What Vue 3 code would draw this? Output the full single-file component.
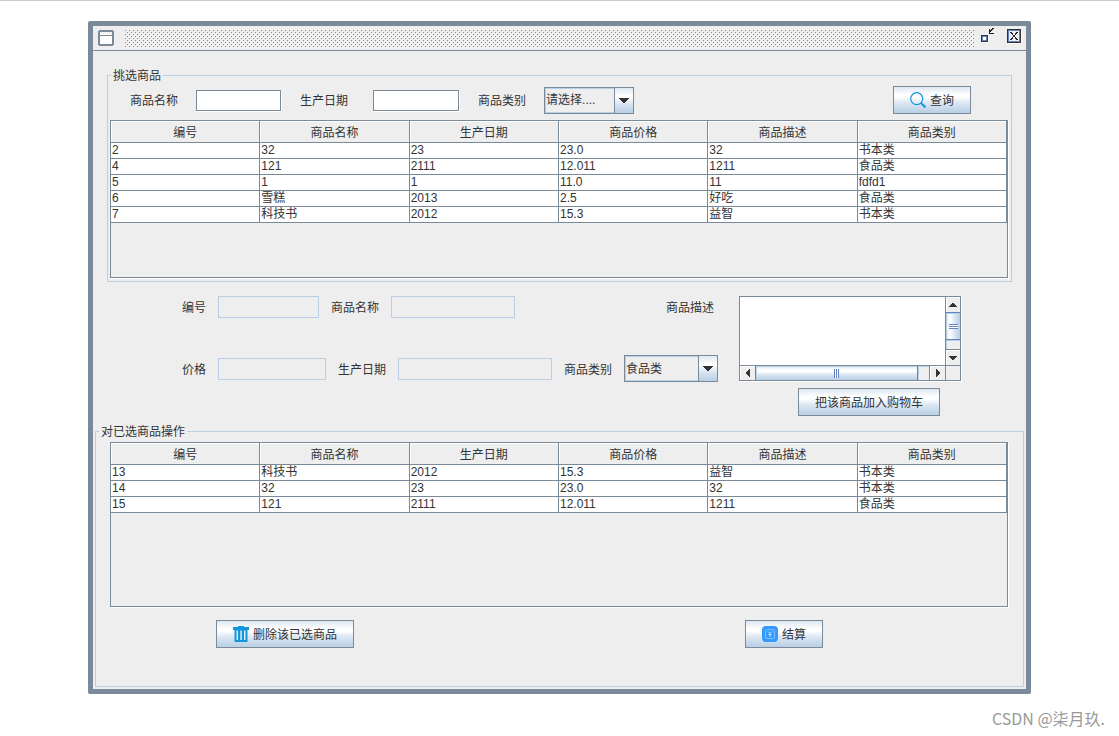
<script setup>
import { ref } from 'vue'

const columns = ['编号', '商品名称', '生产日期', '商品价格', '商品描述', '商品类别']

const goods = [
  ['2', '32', '23', '23.0', '32', '书本类'],
  ['4', '121', '2111', '12.011', '1211', '食品类'],
  ['5', '1', '1', '11.0', '11', 'fdfd1'],
  ['6', '雪糕', '2013', '2.5', '好吃', '食品类'],
  ['7', '科技书', '2012', '15.3', '益智', '书本类'],
]

const cart = [
  ['13', '科技书', '2012', '15.3', '益智', '书本类'],
  ['14', '32', '23', '23.0', '32', '书本类'],
  ['15', '121', '2111', '12.011', '1211', '食品类'],
]

const searchName = ref('')
const searchDate = ref('')
const searchType = ref('请选择....')
const type = ref('食品类')
const description = ref('')
</script>

<template>
  <div class="page">
    <main class="window">
      <header class="titlebar">
        <svg class="frame-icon" width="16" height="16" shape-rendering="crispEdges">
          <path fill="#7a8a99" d="M1 0h14v1h1v14h-1v1H1v-1H0V1h1z" />
          <path fill="#fff" d="M2 2h12v3H2zM2 6h12v8H2z" />
          <path fill="#b8cfe5" d="M3 2h1v1H3zM7 2h1v1H7zM11 2h1v1h-1zM5 3h1v1H5zM9 3h1v1H9zM13 3h1v1h-1z" />
        </svg>
        <svg class="bumps" width="100%" height="18" shape-rendering="crispEdges">
          <defs>
            <pattern id="bumps" width="4" height="4" patternUnits="userSpaceOnUse">
              <path fill="#fff" d="M0 0h1v1H0zM2 2h1v1H2z" />
              <path fill="#7a8a99" d="M1 1h1v1H1zM3 3h1v1H3z" />
            </pattern>
          </defs>
          <rect width="100%" height="18" fill="url(#bumps)" />
        </svg>
        <button class="title-btn" aria-label="还原">
          <svg width="15" height="16" shape-rendering="crispEdges">
            <path fill="#fff" d="M2 8h7v7H2z" />
            <path fill="#333" d="M1 7h7v7H1z" />
            <path fill="#6382bf" d="M2 8h5v5H2z" />
            <path fill="#fff" d="M3 9h3v3H3z" />
            <path fill="#222" d="M12 0h2v1h-2zM11 1h2v1h-2zM10 2h2v1h-2zM9 1h1v4h4v1H9zM9 3h2v1H9z" />
          </svg>
        </button>
        <button class="title-btn" aria-label="关闭">
          <svg width="15" height="15" shape-rendering="crispEdges">
            <path fill="#fff" d="M1 1h14v14H1z" />
            <path fill="#333" d="M0 0h14v14H0z" />
            <path fill="#6382bf" d="M1 1h12v12H1z" />
            <path fill="#eee" d="M2 2h10v10H2z" />
            <path
              fill="#222a44"
              d="M3 3h2v1H3zM4 4h2v1H4zM5 5h1v1H5zM6 6h2v2H6zM5 8h1v1H5zM4 9h2v1H4zM3 10h2v1H3zM9 3h2v1H9zM8 4h2v1H8zM8 5h1v1H8zM8 8h1v1H8zM8 9h2v1H8zM9 10h2v1H9z"
            />
          </svg>
        </button>
      </header>

      <fieldset class="group group-search">
        <legend>挑选商品</legend>
        <form class="search-row" @submit.prevent>
          <label for="s-name">商品名称</label>
          <input id="s-name" v-model="searchName" class="field first" type="text" />
          <label for="s-date">生产日期</label>
          <input id="s-date" v-model="searchDate" class="field second" type="text" />
          <label for="s-type">商品类别</label>
          <div class="combo combo-search">
            <select id="s-type" v-model="searchType">
              <option>请选择....</option>
              <option>书本类</option>
              <option>食品类</option>
            </select>
            <span class="combo-arrow"><svg width="10" height="5" shape-rendering="crispEdges"><path fill="#333" d="M0 0h10v1H9v1H8v1H7v1H6v1H4V4H3V3H2V2H1V1H0z" /></svg></span>
          </div>
          <button class="btn query" type="submit">
            <svg width="16" height="16" viewBox="0 0 16 16" fill="none">
              <circle cx="6.7" cy="6.7" r="6" stroke="#1296db" stroke-width="1.2" />
              <path stroke="#1296db" stroke-width="2" d="M11 11l4.4 4.4" />
            </svg>
            <span>查询</span>
          </button>
        </form>
        <div class="scrollpane pane-goods">
          <table>
            <thead>
              <tr><th v-for="c in columns" :key="c" scope="col">{{ c }}</th></tr>
            </thead>
            <tbody>
              <tr v-for="r in goods" :key="r[0]"><td v-for="(v, i) in r" :key="i">{{ v }}</td></tr>
            </tbody>
          </table>
        </div>
      </fieldset>

      <form class="detail" @submit.prevent>
        <div class="detail-left">
          <div class="detail-row upper">
            <label for="d-id">编号</label>
            <input id="d-id" class="readonly w-id" type="text" readonly />
            <label for="d-name">商品名称</label>
            <input id="d-name" class="readonly w-name" type="text" readonly />
            <label class="desc-label" for="d-desc">商品描述</label>
          </div>
          <div class="detail-row lower">
            <label for="d-price">价格</label>
            <input id="d-price" class="readonly w-price" type="text" readonly />
            <label for="d-date">生产日期</label>
            <input id="d-date" class="readonly w-date" type="text" readonly />
            <label for="d-type">商品类别</label>
            <div class="combo combo-type">
              <select id="d-type" v-model="type">
                <option>食品类</option>
                <option>书本类</option>
              </select>
              <span class="combo-arrow"><svg width="10" height="5" shape-rendering="crispEdges"><path fill="#333" d="M0 0h10v1H9v1H8v1H7v1H6v1H4V4H3V3H2V2H1V1H0z" /></svg></span>
            </div>
          </div>
        </div>
        <div class="detail-right">
          <div class="textpane">
            <textarea id="d-desc" v-model="description"></textarea>
            <div class="vbar">
              <button class="bar-btn" type="button" aria-label="向上"><svg width="8" height="4" shape-rendering="crispEdges"><path fill="#333" d="M3 0h2v1h1v1h1v1h1v1H0V3h1V2h1V1h1z" /></svg></button>
              <div class="thumb"><i></i></div>
              <div class="track"></div>
              <button class="bar-btn" type="button" aria-label="向下"><svg width="8" height="4" shape-rendering="crispEdges"><path fill="#333" d="M0 0h8v1H7v1H6v1H5v1H3V3H2V2H1V1H0z" /></svg></button>
            </div>
            <div class="hbar">
              <button class="bar-btn" type="button" aria-label="向左"><svg width="4" height="8" shape-rendering="crispEdges"><path fill="#333" d="M4 0v8H3V7H2V6H1V5H0V3h1V2h1V1h1V0z" /></svg></button>
              <div class="thumb"><i></i></div>
              <div class="track"></div>
              <button class="bar-btn" type="button" aria-label="向右"><svg width="4" height="8" shape-rendering="crispEdges"><path fill="#333" d="M0 0h1v1h1v1h1v1h1v2H3v1H2v1H1v1H0z" /></svg></button>
            </div>
            <div class="corner"></div>
          </div>
          <button class="btn add" type="submit"><span>把该商品加入购物车</span></button>
        </div>
      </form>

      <fieldset class="group group-cart">
        <legend>对已选商品操作</legend>
        <div class="scrollpane pane-cart">
          <table>
            <thead>
              <tr><th v-for="c in columns" :key="c" scope="col">{{ c }}</th></tr>
            </thead>
            <tbody>
              <tr v-for="r in cart" :key="r[0]"><td v-for="(v, i) in r" :key="i">{{ v }}</td></tr>
            </tbody>
          </table>
        </div>
        <div class="actions">
          <button class="btn remove" type="button">
            <svg width="16" height="16" viewBox="0 0 16 16">
              <path fill="#1296db" d="M5 0h6v1h5v3h-1.500v12h-13V4H0V1h5z" />
              <path fill="#dcebf6" d="M3.500 4.500h1.500V14H3.500zM7.300 4.500h1.500V14H7.300zM11 4.500h1.500V14H11z" />
            </svg>
            <span>删除该已选商品</span>
          </button>
          <button class="btn settle" type="button">
            <svg width="16" height="16" viewBox="0 0 16 16" fill="none">
              <rect width="16" height="16" rx="4" fill="#3399ff" />
              <rect x="3.5" y="3.5" width="9" height="9" rx="1.5" stroke="#7dbeff" />
              <path stroke="#c4e1ff" d="M6 5.500l2 2 2-2M8 7.500V11M6.500 8.500h3" />
            </svg>
            <span>结算</span>
          </button>
        </div>
      </fieldset>
    </main>
    <footer class="credit">CSDN @柒月玖.</footer>
  </div>
</template>

<style>
body {
  background: #fff;
}
</style>

<style scoped>
.page {
  --line: #7a8a99;
  --soft: #b8cfe5;
  --metal: linear-gradient(#dde8f3, #fff 30%, #fff 38%, #dde8f3 60%, #b8cfe5);
  border-top: 1px solid #ccc;
  padding: 20px 88px 0;
  color: #333;
  font: 12px/16px "Liberation Sans", "Noto Sans CJK SC", sans-serif;
}
.page * {
  box-sizing: border-box;
}
button,
input,
select,
textarea {
  margin: 0;
  padding: 0;
  border: 0;
  border-radius: 0;
  background: none;
  color: inherit;
  font: inherit;
  outline: none;
}
svg {
  display: block;
  flex: none;
}
.window {
  border: 5px solid var(--line);
  border-radius: 2px;
  background: #eee;
  padding-bottom: 2px;
}
.titlebar {
  display: flex;
  align-items: center;
  height: 25px;
  padding: 0 4px 0 5px;
  border-bottom: 1px solid var(--line);
}
.bumps {
  flex: 1;
  min-width: 0;
  margin: 0 6px 0 10px;
}
.title-btn {
  display: flex;
  margin-bottom: 4px;
}
.title-btn + .title-btn {
  margin-left: 12px;
}
.group {
  min-width: 0;
  padding: 0;
  border: 1px solid var(--soft);
}
.group legend {
  margin-left: 3px;
  padding: 2px 2px 0;
}
.group-search {
  margin: 15px 14px 0;
}
.group-cart {
  margin: 0 2px;
}
label {
  flex: none;
  padding-top: 2px;
}
.btn span {
  padding-top: 2px;
}
.search-row {
  display: flex;
  align-items: center;
  margin-top: 2px;
  padding: 0 40px 0 22px;
}
.field {
  height: 21px;
  padding: 0 3px;
  border: 1px solid var(--line);
  background: #fff;
  box-shadow: 1px 1px #fff;
}
.first {
  width: 85px;
  margin: 0 19px 0 18px;
}
.second {
  width: 86px;
  margin: 0 19px 0 25px;
}
.combo {
  display: grid;
  height: 27px;
  background: #eee;
}
.combo select {
  grid-area: 1 / 1;
  appearance: none;
  min-width: 0;
  padding: 0 20px 0 1px;
  border: 1px solid var(--line);
  box-shadow: inset 0 0 0 1px var(--soft);
}
.combo-arrow {
  grid-area: 1 / 1;
  justify-self: end;
  display: flex;
  align-items: center;
  justify-content: center;
  width: 20px;
  border: 1px solid var(--line);
  background: var(--metal);
  pointer-events: none;
}
.combo-search {
  width: 90px;
  margin-left: 18px;
}
.combo-type {
  width: 94px;
}
.btn {
  display: flex;
  align-items: center;
  justify-content: center;
  gap: 4px;
  height: 28px;
  border: 1px solid var(--line);
  background: var(--metal);
  white-space: nowrap;
}
.query {
  width: 78px;
  margin-left: auto;
}
.scrollpane {
  border: 1px solid var(--line);
  box-shadow: 1px 1px #fff;
}
.pane-goods {
  min-height: 158px;
  margin: 6px 3px 3px 2px;
}
.pane-cart {
  min-height: 165px;
  margin: 2px 15px 0 14px;
}
table {
  width: 100%;
  table-layout: fixed;
  border-collapse: separate;
  border-spacing: 0;
}
th,
td {
  padding: 0;
  border: 0 solid var(--line);
  border-width: 0 1px 1px 0;
  white-space: nowrap;
  overflow: hidden;
}
th {
  height: 22px;
  padding-top: 2px;
  font-weight: normal;
  text-align: center;
  box-shadow: inset 1px 1px #fff;
}
td {
  height: 16px;
  padding-left: 1px;
  line-height: 15px;
  background: #fff;
}
.detail {
  display: flex;
  gap: 21px;
  height: 140px;
  padding: 14px 65px 0 89px;
}
.detail-left {
  flex: 1;
  display: flex;
  flex-direction: column;
  gap: 37px;
}
.detail-row {
  display: flex;
  align-items: center;
  gap: 12px;
}
.lower {
  height: 27px;
}
.desc-label {
  margin: 0 4px 0 auto;
}
.readonly {
  height: 22px;
  border: 1px solid var(--soft);
}
.w-id {
  width: 101px;
}
.w-name {
  width: 124px;
}
.w-price {
  width: 108px;
}
.w-date {
  width: 154px;
}
.detail-right {
  display: flex;
  flex-direction: column;
  align-items: flex-start;
  gap: 7px;
  width: 222px;
}
.textpane {
  display: grid;
  grid-template-columns: 1fr 15px;
  grid-template-rows: 1fr 15px;
  width: 222px;
  height: 85px;
  border: 1px solid var(--line);
  box-shadow: 1px 1px #fff;
}
textarea {
  width: 100%;
  height: 100%;
  background: #fff;
  resize: none;
}
.vbar,
.hbar {
  display: flex;
  min-width: 0;
  min-height: 0;
}
.vbar {
  flex-direction: column;
  border-left: 1px solid var(--line);
}
.hbar {
  border-top: 1px solid var(--line);
}
.bar-btn {
  display: flex;
  flex: none;
  align-items: center;
  justify-content: center;
  width: 15px;
  height: 15px;
  box-shadow: inset 1px 1px #fff;
}
.vbar .bar-btn {
  width: 14px;
}
.hbar .bar-btn {
  height: 14px;
}
.thumb {
  flex: 1;
  display: flex;
  align-items: center;
  justify-content: center;
  border: 1px solid #6382bf;
  box-shadow: inset 1px 1px var(--soft);
}
.vbar .thumb {
  border-width: 1px 0;
  background: linear-gradient(90deg, #dde8f3, #fff 30%, #dde8f3 60%, #b8cfe5);
}
.hbar .thumb {
  border-width: 0 1px;
  background: var(--metal);
}
.thumb i {
  width: 9px;
  height: 5px;
  background: repeating-linear-gradient(#6382bf 0 1px, #fff 1px 2px);
}
.hbar .thumb i {
  width: 5px;
  height: 9px;
  background: repeating-linear-gradient(90deg, #6382bf 0 1px, #fff 1px 2px);
}
.vbar .track {
  height: 10px;
  border-bottom: 1px solid var(--line);
  box-shadow: inset 1px 1px var(--soft);
}
.hbar .track {
  width: 12px;
  border-right: 1px solid var(--line);
  box-shadow: inset 1px 1px var(--soft);
}
.corner {
  border: 0 solid var(--line);
  border-width: 1px 0 0 1px;
}
.add {
  width: 142px;
  margin-left: 59px;
}
.actions {
  display: flex;
  justify-content: space-between;
  padding: 13px 200px 38px 120px;
}
.remove {
  width: 138px;
}
.settle {
  width: 78px;
}
.credit {
  margin: 14px -74px 0 0;
  color: #999;
  font-family: "Noto Sans CJK SC", sans-serif;
  font-size: 16px;
  line-height: 20px;
  text-align: right;
}
</style>
